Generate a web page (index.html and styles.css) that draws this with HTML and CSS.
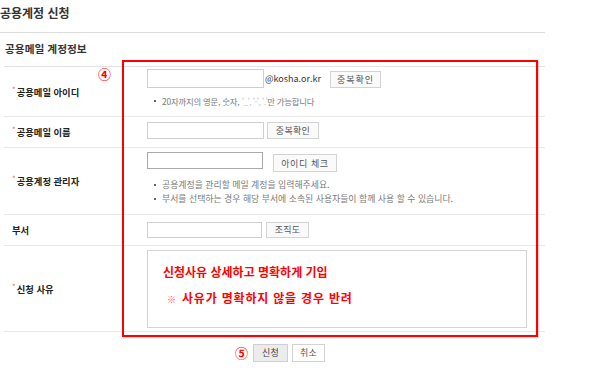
FILE: index.html
```html
<!DOCTYPE html>
<html lang="ko">
<head>
<meta charset="utf-8">
<title>공용계정 신청</title>
<link rel="stylesheet" href="styles.css">
</head>
<body>
<div class="page">
  <h1 class="title">공용계정 신청</h1>
  <h2 class="section">공용메일 계정정보</h2>
  <div class="form">
    <div class="row r1">
      <div class="label"><span class="req">*</span>공용메일 아이디</div>
      <div class="field">
        <div class="line">
          <input class="inp" type="text">
          <span class="domain">@kosha.or.kr</span>
          <button class="btn btn-dup1">중복확인</button>
        </div>
        <ul class="notes">
          <li class="note-id">20자까지의 영문, 숫자, <span class="faint">'_', '-', '.'</span>만 가능합니다</li>
        </ul>
      </div>
    </div>
    <div class="row r2">
      <div class="label"><span class="req">*</span>공용메일 이름</div>
      <div class="field">
        <div class="line">
          <input class="inp" type="text">
          <button class="btn btn-dup2">중복확인</button>
        </div>
      </div>
    </div>
    <div class="row r3">
      <div class="label"><span class="req">*</span>공용계정 관리자</div>
      <div class="field">
        <div class="line">
          <input class="inp inp-dark" type="text">
          <button class="btn btn-check">아이디 체크</button>
        </div>
        <ul class="notes">
          <li>공용계정을 관리할 메일 계정을 입력해주세요.</li>
          <li>부서를 선택하는 경우 해당 부서에 소속된 사용자들이 함께 사용 할 수 있습니다.</li>
        </ul>
      </div>
    </div>
    <div class="row r4">
      <div class="label">부서</div>
      <div class="field">
        <div class="line">
          <input class="inp inp-dept" type="text">
          <button class="btn btn-org">조직도</button>
        </div>
      </div>
    </div>
    <div class="row r5">
      <div class="label"><span class="req">*</span>신청 사유</div>
      <div class="field">
        <div class="reason">
          <p class="reason-1">신청사유 상세하고 명확하게 기입</p>
          <p class="reason-2"><span class="mark">※</span>사유가 명확하지 않을 경우 반려</p>
        </div>
      </div>
    </div>
  </div>
  <div class="actions">
    <span class="step step-5">⑤</span>
    <button class="btn btn-submit">신청</button>
    <button class="btn btn-cancel">취소</button>
  </div>
  <div class="highlight"></div>
  <span class="step step-4">④</span>
</div>
</body>
</html>
```

FILE: styles.css
```css
* { box-sizing: border-box; }
html, body { margin: 0; padding: 0; background: #fff; }
body {
  font-family: "Noto Sans CJK KR", "Noto Sans", sans-serif;
  color: #333;
}
.page { position: relative; width: 599px; height: 368px; overflow: hidden; }

.title {
  margin: 0;
  width: 545px;
  font-size: 12px;
  font-weight: 700;
  line-height: 26px;
  padding: 0 0 6px 0;
  border-bottom: 1px solid #dcdcdc;
  color: #333;
}
.section {
  margin: 6px 0 7px 5px;
  font-size: 10.7px;
  font-weight: 700;
  line-height: 20px;
  color: #333;
}

.form {
  margin-left: 4px;
  width: 541px;
  border-top: 1px solid #e2e2e2;
}
.row {
  display: grid;
  grid-template-columns: 143px 1fr;
  border-bottom: 1px solid #e9e9e9;
}
.label {
  display: flex;
  align-items: center;
  padding-left: 8px;
  font-size: 9.3px;
  font-weight: 700;
  color: #222;
  line-height: 12px;
}
.req {
  color: #f07050;
  font-size: 8px;
  font-weight: 400;
  align-self: center;
  margin-top: -4px;
  margin-right: 1px;
}
.r1 .field { padding: 2px 0 8px; }
.r2 .field { padding: 5px 0 8px; }
.r3 .field { padding: 4px 0 8px; }
.r4 .field { padding: 7px 0 7px; }
.r5 .field { padding: 4px 0 3px; }

.line { display: flex; align-items: flex-start; }
.inp {
  display: block;
  width: 117px;
  height: 17px;
  margin: 0;
  padding: 0 3px;
  border: 1px solid #cfcfcf;
  background: #fff;
  font: inherit;
}
.r1 .inp { height: 19px; }
.inp-dark { width: 116px; border-color: #a9a9a9; }
.inp-dept { width: 115px; height: 16px; }

.domain {
  font-size: 9px;
  line-height: 19px;
  color: #333;
  margin-left: 1px;
}
.btn {
  display: block;
  margin: 0;
  padding: 0;
  height: 17px;
  border: 1px solid #d3d3d3;
  background: #fafafa;
  color: #555;
  font-family: "Noto Sans CJK KR", sans-serif;
  font-size: 9px;
  line-height: 15px;
  letter-spacing: 0.3px;
}
.btn-dup1 { width: 51px; margin-left: 9px; margin-top: 2px; letter-spacing: 1px; }
.btn-dup2 { width: 52px; margin-left: 3px; }
.btn-check { width: 64px; height: 18px; margin-left: 10px; margin-top: 2px; letter-spacing: 0.6px; }
.btn-org { width: 43px; height: 16px; margin-left: 4px; line-height: 14px; }

.notes {
  list-style: none;
  margin: 6px 0 0;
  padding: 0 0 0 15px;
  font-size: 8.9px;
  line-height: 14px;
  color: #7a7a7a;
}
.notes li { position: relative; white-space: nowrap; }
.notes li::before {
  content: "";
  position: absolute;
  left: -8px;
  top: 6px;
  width: 2px;
  height: 2px;
  background: #666;
}
.note-id { font-size: 8.4px; letter-spacing: -0.2px; }
.faint { color: #c4c4c4; letter-spacing: -0.6px; }

.reason {
  width: 380px;
  height: 78px;
  border: 1px solid #d4d4d4;
  padding: 12px 0 0 15px;
  color: #ff0000;
  font-weight: 700;
}
.reason p { margin: 0; white-space: nowrap; }
.reason-1 { font-size: 12px; line-height: 18px; }
.reason-2 { font-size: 12px; line-height: 18px; margin-top: 8px !important; padding-left: 4px; letter-spacing: 0.8px; }
.mark { font-weight: 400; font-size: 9px; margin-right: 6px; color: #ff5050; letter-spacing: 0; }

.actions {
  display: flex;
  align-items: center;
  gap: 4px;
  margin: 12px 0 0 253px;
  position: relative;
}
.btn-submit { width: 35px; height: 18px; background: #ececec; color: #444; border-color: #d0d0d0; line-height: 16px; }
.btn-cancel { width: 33px; height: 18px; background: #fff; color: #555; line-height: 16px; }

.highlight {
  position: absolute;
  left: 122px;
  top: 60px;
  width: 416px;
  height: 277px;
  border: 2px solid #ff0000;
  box-shadow: 1px 1px 0 rgba(255, 0, 0, 0.18);
  pointer-events: none;
}
.step {
  position: absolute;
  color: #ff0000;
  font-size: 13px;
  line-height: 13px;
  font-weight: 700;
}
.step-4 { left: 98px; top: 67px; }
.step-5 { left: -18px; top: 2px; }
```
